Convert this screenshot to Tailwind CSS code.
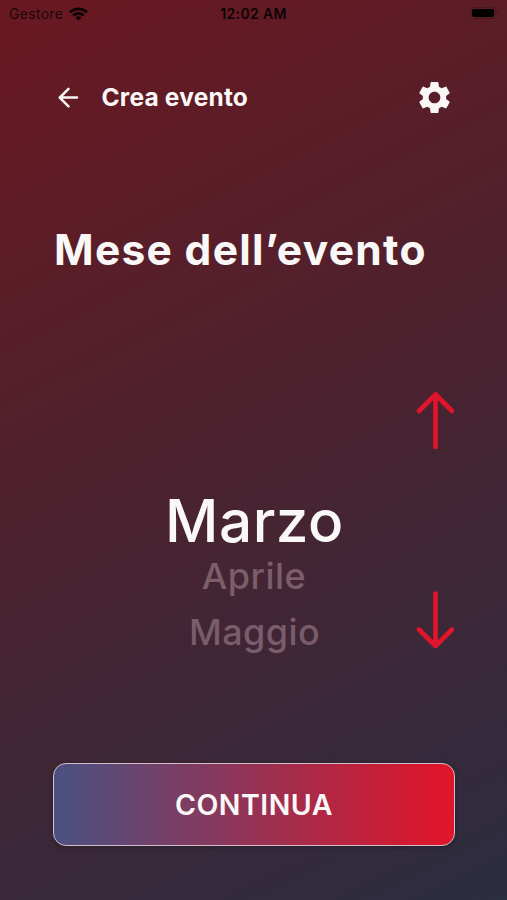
<!DOCTYPE html>
<html lang="it">
<head>
<meta charset="utf-8">
<title>Crea evento</title>
<script src="https://cdn.jsdelivr.net/npm/@tailwindcss/browser@4"></script>
</head>
<body class="w-[507px] h-[900px] overflow-hidden font-[Inter,sans-serif] text-[#faf7f7] bg-[linear-gradient(154deg,#6a1820_0%,#2b2d40_100%)] flex flex-col">
  <header class="h-7 shrink-0 grid grid-cols-3 items-center px-[9px] text-[#0c0304] text-[14px] leading-7">
    <div class="flex items-center gap-[6px] text-black/75">
      <span class="tracking-[0.3px]">Gestore</span>
      <svg class="w-[19px] h-[14px] -mt-px" viewBox="0 0 19 14" fill="none" stroke="#0c0304" stroke-width="2.7"><path d="M1 5.2a12.3 12.3 0 0 1 17 0M4.2 8.5a7.8 7.8 0 0 1 10.6 0"/><path d="M9.500 13.500 6.500 10.700a4.500 4.500 0 0 1 6 0z" fill="#0c0304" stroke="none"/></svg>
    </div>
    <span class="justify-self-center font-semibold tracking-[0.35px]">12:02 AM</span>
    <div class="justify-self-end flex items-center gap-px mr-[-1px] -mt-[2px]">
      <div class="w-[26px] h-[12px] rounded-[4px] border border-black/20 p-px"><div class="h-full rounded-[2px] bg-black"></div></div>
      <div class="w-[2px] h-[4px] rounded-r bg-black/20"></div>
    </div>
  </header>
  <nav class="h-[140px] shrink-0 flex items-center pl-[54px] pr-[53px]">
    <svg class="w-[28px] h-[28px]" viewBox="0 0 28 28" fill="none" stroke="currentColor" stroke-width="2.5" stroke-linecap="round" stroke-linejoin="round"><path d="M23 13.600H5.800M14.500 4.800 5.700 13.600 14.500 22.400"/></svg>
    <span class="ml-[19.5px] -mt-[2px] text-[24.5px] font-bold tracking-[0.2px]">Crea evento</span>
    <svg class="ml-auto -mt-[2px] w-[39px] h-[39px]" viewBox="0 0 24 24" fill="currentColor"><path d="M19.140 12.940c.04-.3.060-.610.060-.940 0-.320-.020-.640-.070-.940l2.030-1.580c.18-.14.230-.410.120-.610l-1.920-3.320c-.12-.22-.37-.29-.59-.22l-2.390.96c-.5-.38-1.030-.7-1.620-.94L14.400 2.810c-.04-.24-.24-.41-.48-.41h-3.840c-.24 0-.43.170-.47.410L9.250 5.350C8.660 5.590 8.120 5.920 7.630 6.290L5.240 5.330c-.22-.08-.47 0-.59.220L2.740 8.870c-.12.21-.08.470.12.610l2.030 1.580C4.840 11.360 4.800 11.690 4.800 12s.02.640.070.940l-2.030 1.580c-.18.14-.23.410-.12.610l1.920 3.320c.12.220.370.290.590.220l2.390-.96c.5.380 1.030.7 1.620.940l.36 2.540c.05.240.240.410.480.410h3.840c.24 0 .44-.17.470-.41l.36-2.540c.59-.24 1.130-.56 1.620-.94l2.390.960c.22.080.470 0 .59-.22l1.920-3.320c.12-.22.070-.47-.12-.61L19.140 12.940zM12 15.600c-1.980 0-3.600-1.620-3.600-3.600s1.620-3.600 3.600-3.600 3.600 1.620 3.600 3.600S13.980 15.600 12 15.600z"/></svg>
  </nav>
  <main class="flex-1 flex flex-col px-[53px] pb-[54px]">
    <h1 class="mt-[57px] pl-px text-[42.5px] leading-[50px] font-bold tracking-[1.3px] whitespace-nowrap">Mese dell’evento</h1>
    <section class="mt-[117px] h-[257px] grid grid-rows-[257px] grid-cols-[40px_1fr_40px]">
      <div class="col-start-2 pt-[95px] flex flex-col items-center">
        <div class="text-[58.5px] leading-[68px] font-medium tracking-[0.5px] pl-[2px]">Marzo</div>
        <div class="text-[36px] leading-[56px] font-medium tracking-[0.5px] text-[#7c5d6a] -mt-[7px] pl-px">Aprile</div>
        <div class="text-[36px] leading-[56px] font-medium tracking-[0.4px] text-[#7a5c6a] pl-[2px]">Maggio</div>
      </div>
      <div class="flex flex-col justify-between items-center text-[#df152c]">
        <svg class="w-[40px] h-[58px]" viewBox="0 0 40 58" fill="none" stroke="currentColor" stroke-width="4.700" stroke-linecap="round" stroke-linejoin="round"><path d="M21.500 55V2.500M5 19 21.500 2.500 38 19"/></svg>
        <svg class="w-[40px] h-[58px]" viewBox="0 0 40 58" fill="none" stroke="currentColor" stroke-width="4.700" stroke-linecap="round" stroke-linejoin="round"><path d="M21.500 2.500V55M5 38.500 21.500 55 38 38.500"/></svg>
      </div>
    </section>
    <button class="mt-auto h-[83px] w-[402px] pt-[2px] rounded-[13px] border-[1.5px] border-[#d5bdc9] bg-[linear-gradient(90deg,#4c5080_2%,#df152a_97%)] bg-origin-border shadow-[0_1px_5px_rgba(0,0,0,0.3)] text-[28.5px] font-semibold tracking-[0.5px]">CONTINUA</button>
  </main>
</body>
</html>
